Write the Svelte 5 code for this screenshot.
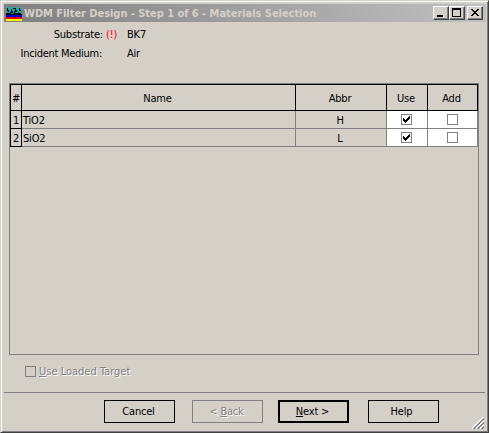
<script>
  const rows = [
    { n: 1, name: 'TiO2', abbr: 'H' },
    { n: 2, name: 'SiO2', abbr: 'L' }
  ];
</script>

<div class="window">
  <header>
    <svg class="logo" width="16" height="16" viewBox="0 0 16 16" shape-rendering="crispEdges">
      <path fill="#000" d="M1 3h4v1h2v-1h3v1h2v-1h2v1h1v2h-1v2h1v2H0V8h2V6H1z" />
      <path fill="#00b8b8" d="M0 2h3v1H0zM2 3h3v2H2zM3 5h2v2H3zM1 7h3v1H1zM5 2h3v1H5zM6 4h3v2H6zM7 6h1v2H7zM5 8h2v1H5zM10 3h3v2h-3zM13 2h2v1h-2zM14 4h2v1h-2zM11 5h2v2h-2zM13 6h2v2h-2zM9 7h3v1H9z" />
      <path fill="#0000e8" d="M0 10h16v2H0z" />
      <path fill="#f00000" d="M0 12h16v2H0z" />
      <path fill="#ff0" d="M0 14h16v2H0z" />
      <path fill="#000" d="M0 9h16v1H0zM9 10h1v3H9z" />
    </svg>
    <h1>WDM Filter Design - Step 1 of 6 - Materials Selection</h1>
    <div class="controls">
      <button aria-label="Minimize"><svg width="12" height="10" shape-rendering="crispEdges"><path d="M2 7h6v2H2z" /></svg></button>
      <button aria-label="Maximize"><svg width="12" height="10" shape-rendering="crispEdges"><path fill-rule="evenodd" d="M1 0h9v9H1zM2 2v6h7V2z" /></svg></button>
      <button class="close" aria-label="Close"><svg width="12" height="10" shape-rendering="crispEdges"><path d="M2 1h2v1h1v1h2v-1h1v-1h2v1h-1v1h-1v1h-1v1h1v1h1v1h1v1h-2v-1h-1v-1h-2v1h-1v1h-2v-1h1v-1h1v-1h1v-1h-1v-1h-1v-1h-1z" /></svg></button>
    </div>
  </header>

  <dl>
    <dt class="sub">Substrate:</dt><dd class="warn">(!)</dd><dd>BK7</dd>
    <dt class="medium">Incident Medium:</dt><dd></dd><dd>Air</dd>
  </dl>

  <main>
    <div class="row head">
      <div>#</div><div>Name</div><div>Abbr</div><div>Use</div><div>Add</div>
    </div>
    {#each rows as r}
      <div class="row">
        <div class="num">{r.n}</div><div class="left">{r.name}</div><div>{r.abbr}</div>
        <div class="white use"><i class="box"><svg width="9" height="9" shape-rendering="crispEdges"><path d="M1 3h1v1h1v1h1v-1h1v-1h1v-1h1v-1h1v3h-1v1h-1v1h-1v1h-1v1h-1v-1h-1v-1h-1z" /></svg></i></div>
        <div class="white"><i class="box"></i></div>
      </div>
    {/each}
  </main>

  <div class="option"><i class="box"></i><span class="target"><u>U</u>se Loaded Target</span></div>

  <footer>
    <button class="cancel">Cancel</button>
    <button class="back" disabled>&lt; <u>B</u>ack</button>
    <button class="next"><u>N</u>ext &gt;</button>
    <button class="help">Help</button>
    <svg class="grip" width="12" height="12" shape-rendering="crispEdges">
      <path stroke="#fff" d="M0 11.5L11.5 0M4 11.5L11.5 4M8 11.5L11.5 8" />
      <path stroke="#808080" stroke-width="1.8" d="M1.5 12L12 1.5M5.5 12L12 5.5M9.5 12L12 9.5" />
    </svg>
  </footer>
</div>

<style>
  .window {
    box-sizing: border-box; width: 489px; height: 433px; padding: 2px;
    display: flex; flex-direction: column; background: #d4d0c8; color: #000;
    border: 1px solid; border-color: #d4d0c8 #404040 #404040 #d4d0c8;
    box-shadow: inset 1px 1px #fff, inset -1px -1px #808080;
    font: 11px/13px "DejaVu Sans Condensed", "DejaVu Sans", sans-serif;
    font-stretch: condensed; letter-spacing: -0.2px; white-space: nowrap; overflow: hidden;
  }
  header { display: flex; align-items: center; height: 18px; margin: 1px 0 0 1px; width: 482px; background: linear-gradient(90deg, #808080, #c0c0c0); }
  .logo { margin: 0 2px; flex: none; }
  h1 { font-size: 11px; line-height: 18px; margin: 0; padding-top: 2px; color: #d4d0c8; letter-spacing: -0.04px; }
  .controls { display: flex; margin: 0 3px 0 auto; }
  .controls button { box-sizing: border-box; width: 16px; height: 14px; padding: 1px; display: flex; background: #d4d0c8; border: 1px solid; border-color: #fff #404040 #404040 #fff; box-shadow: inset -1px -1px #808080; }
  .controls .close { margin-left: 2px; }
  dl { display: grid; grid-template-columns: 100px 24px auto; grid-template-rows: 19px 19px; margin: 6px 0 0; height: 56px; box-sizing: border-box; }
  dt { text-align: right; }
  .medium { letter-spacing: -0.28px; padding-right: 1px; }
  dd { margin: 0; }
  .warn { color: #f00; padding-left: 3px; }
  main { box-sizing: border-box; flex: none; width: 470px; height: 272px; margin: -1px 0 0 6px; border: 1px solid #808080; }
  .row { display: grid; grid-template-columns: 12px 274px 91px 41px 50px; grid-template-rows: 18px; text-align: center; line-height: 19px; }
  .row > div { box-sizing: border-box; min-height: 0; padding-right: 2px; border-right: 1px solid #808080; border-bottom: 1px solid #808080; }
  .row > div:first-child { padding: 0; border-left: 1px solid #000; }
  .row > .num { border-color: #000; }
  .head { grid-template-rows: 27px; line-height: 27px; }
  .head > div { border-color: #000; border-top: 1px solid #000; }
  .row > .left { text-align: left; padding-left: 1px; }
  .row > .white { background: #fff; display: flex; align-items: center; justify-content: center; padding-right: 0; }
  .row > .use { padding-right: 1px; }
  .box { box-sizing: border-box; display: block; width: 11px; height: 11px; border: 1px solid #808080; }
  .box svg { display: block; }
  .option { display: flex; align-items: center; height: 13px; margin: 10px 0 0 22px; color: #808080; text-shadow: 1px 1px #fff; letter-spacing: 0; }
  .target { margin-left: 3px; }
  footer { position: relative; display: flex; align-items: flex-start; border-top: 1px solid #808080; margin: 14px 1px 0; height: 38px; padding: 7px 0 0 100px; gap: 17px; box-sizing: border-box; }
  footer button { width: 71px; height: 23px; padding: 0 2px 0 0; box-sizing: border-box; background: none; border: 1px solid #000; color: #000; font: inherit; letter-spacing: inherit; }
  footer .back { border-color: #808080; color: #808080; text-shadow: 1px 1px #fff; }
  footer .next { border-width: 2px; margin-left: -2px; }
  footer .help { margin-left: 2px; padding-right: 4px; }
  .grip { position: absolute; right: 1px; bottom: 1px; }
</style>
